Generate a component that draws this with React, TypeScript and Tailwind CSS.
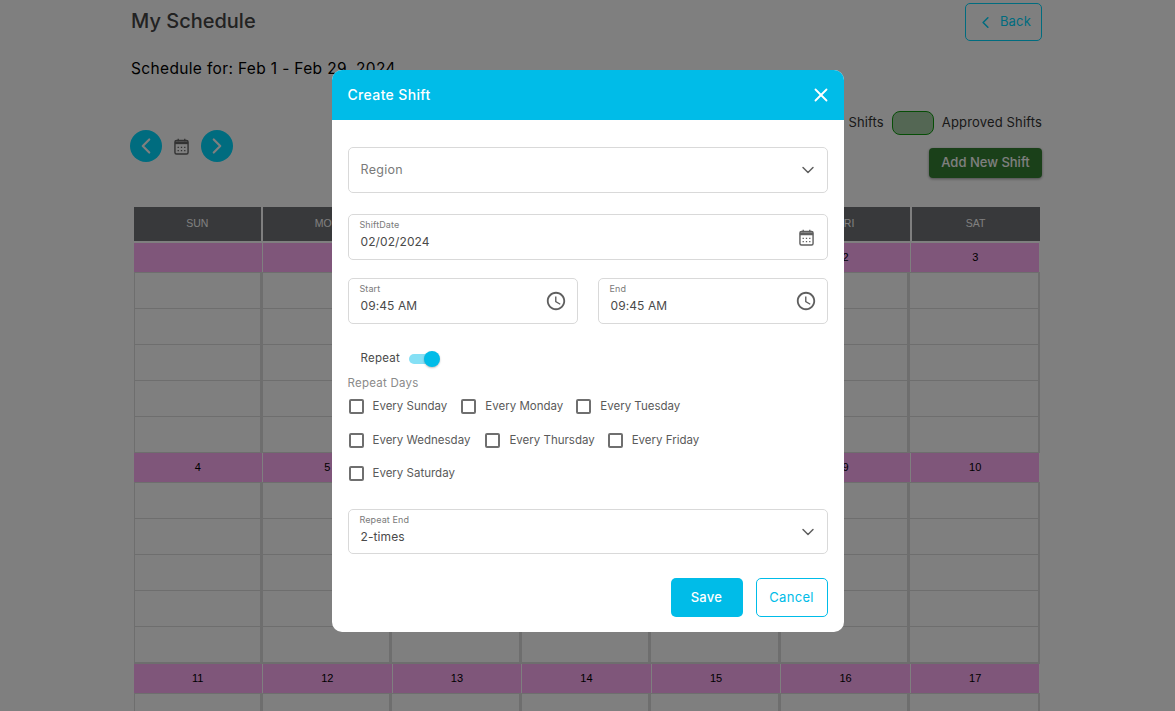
import { ChevronDown, ChevronLeft, ChevronRight, X } from 'lucide-react';

const DAYS = ['SUN', 'MON', 'TUE', 'WED', 'THU', 'FRI', 'SAT'];
const WEEKS = [
  ['', '', '', '', '1', '2', '3'],
  ['4', '5', '6', '7', '8', '9', '10'],
  ['11', '12', '13', '14', '15', '16', '17'],
];

function CalendarIcon({ className }: { className: string }) {
  return (
    <svg viewBox="0 0 16 18" className={className} fill="none">
      <rect x="1" y="2.5" width="14" height="14.5" rx="1.6" stroke="currentColor" strokeWidth="1.5" />
      <path d="M1 3.5h14v3H1z" fill="currentColor" />
      <path d="M4.5 0.8v2.6M11.5 0.8v2.6" stroke="currentColor" strokeWidth="1.4" />
      <path
        d="M3.8 9.2h1.4v1.4H3.8zM7.3 9.2h1.4v1.4H7.3zM10.8 9.2h1.4v1.4h-1.4zM3.8 12.6h1.4V14H3.8zM7.3 12.6h1.4V14H7.3zM10.8 12.6h1.4V14h-1.4z"
        fill="currentColor"
      />
    </svg>
  );
}

function ClockIcon() {
  return (
    <svg viewBox="0 0 24 24" className="h-[22px] w-[22px] text-[#5f5f5f]" fill="currentColor">
      <path d="M11.99 2C6.47 2 2 6.48 2 12s4.47 10 9.99 10C17.52 22 22 17.52 22 12S17.52 2 11.99 2zM12 20c-4.42 0-8-3.58-8-8s3.58-8 8-8 8 3.58 8 8-3.58 8-8 8z" />
      <path d="M12.5 7H11v6l5.25 3.15.75-1.23-4.5-2.67z" />
    </svg>
  );
}

function Field({ label, value, icon, className }: { label: string; value: string; icon: React.ReactNode; className?: string }) {
  return (
    <div className={`relative flex h-[46px] items-center justify-between rounded-[5px] border border-[#d9d9d9] pl-3 pr-[10px] ${className ?? ''}`}>
      <div className="flex flex-col self-start pt-[4px]">
        <span className="-ml-[1px] text-[9px] leading-[12px] tracking-[0.1px] text-[#7a7a7a]">{label}</span>
        <span className="mt-[2px] text-[12px] leading-[18px] tracking-[0.1px] text-[#4a4a4a]">{value}</span>
      </div>
      {icon}
    </div>
  );
}

function DayCheck({ label, className }: { label: string; className?: string }) {
  return (
    <label className={`flex items-center gap-[9px] ${className ?? ''}`}>
      <span className="h-[15px] w-[15px] rounded-[2px] border-2 border-[#6f6f6f]" />
      <span className="pt-[2px] text-[11.5px] text-[#5a5a5a]">{label}</span>
    </label>
  );
}

export default function App() {
  return (
    <div className="relative h-screen overflow-hidden bg-white font-['Inter','Liberation_Sans',sans-serif]">
      <div className="ml-[130px] w-[912px] pt-[3px]">
        <div className="flex items-start justify-between">
          <h1 className="ml-[1px] pt-[6px] text-[20px] font-medium leading-[24px] text-[#444]">My Schedule</h1>
          <button className="flex h-[38px] w-[77px] items-center justify-center gap-[5px] rounded-[5px] border border-[#00d8ff] text-[13px] tracking-[0.2px] text-[#00d8ff]">
            <ChevronLeft size={19} strokeWidth={2} />
            Back
          </button>
        </div>
        <p className="ml-[1px] mt-[18px] text-[15.5px] leading-[20px] tracking-[0.35px] text-black">Schedule for: Feb 1 - Feb 29, 2024</p>

        <div className="mt-[32px] flex justify-end gap-2">
          <div className="flex items-center">
            <span className="text-[13px] tracking-[0.15px] text-[#333]">Pending Shifts</span>
            <span className="ml-2 h-[24px] w-[42px] rounded-[8px] border border-[#0c9c0c] bg-[#a9cfa9]" />
            <span className="ml-2 text-[13px] tracking-[0.15px] text-[#333]">Approved Shifts</span>
          </div>
        </div>

        <div className="-mt-[5px] flex items-start justify-between">
          <div className="flex items-center">
            <button className="flex h-[32px] w-[32px] items-center justify-center rounded-full bg-[#00d8ff] text-white">
              <ChevronLeft size={26} strokeWidth={2} />
            </button>
            <CalendarIcon className="mx-[12px] h-[17px] w-[15px] text-[#666]" />
            <button className="flex h-[32px] w-[32px] items-center justify-center rounded-full bg-[#00d8ff] text-white">
              <ChevronRight size={26} strokeWidth={2} />
            </button>
          </div>
          <button className="mt-[18px] h-[30px] w-[113px] rounded-[4px] bg-[#348032] text-[13px] font-medium text-white shadow-[0_1px_3px_rgba(0,0,0,0.4)]">
            Add New Shift
          </button>
        </div>

        <div className="mt-[29px] ml-[3.5px] w-[906px]">
          <div className="grid grid-cols-7 gap-x-[2px] border-b-[2px] border-white">
            {DAYS.map((d) => (
              <div key={d} className="flex h-[34px] items-center justify-center bg-[#707276] font-['Liberation_Sans',sans-serif] text-[10.5px] text-white">
                {d}
              </div>
            ))}
          </div>
          {WEEKS.map((week, w) => (
            <div key={w}>
              <div className="grid grid-cols-7 gap-x-[1px] border-b border-[#dcdcdc]">
                {week.map((n, i) => (
                  <div key={i} className="flex h-[29px] items-center justify-center bg-[#ffacf4] pb-[1px] font-['Liberation_Sans',sans-serif] text-[11px] text-black">
                    {n}
                  </div>
                ))}
              </div>
              {[0, 1, 2, 3, 4].map((r) => (
                <div key={r} className="grid h-[36px] grid-cols-7 border-b border-[#dcdcdc]">
                  {week.map((_, i) => (
                    <div key={i} className="border-r-[3px] border-[#dcdcdc] first:border-l last:border-r-[2px]" />
                  ))}
                </div>
              ))}
              {w > 0 && <div className="h-[1px] bg-[#dcdcdc]" />}
            </div>
          ))}
        </div>
      </div>

      {/* Modal */}
      <div className="absolute inset-0 flex justify-center bg-black/50">
        <div className="mt-[70px] h-[562px] w-[512px] overflow-hidden rounded-[10px] bg-white">
          <div className="flex h-[50px] items-center justify-between bg-[#00bce8] pb-[1px] pl-4 pr-[12px] text-white">
            <span className="text-[14px] font-medium tracking-[0.35px]">Create Shift</span>
            <X size={22} strokeWidth={2} />
          </div>

          <div className="px-4 pt-[27px]">
            <div className="flex h-[46px] items-center justify-between rounded-[5px] border border-[#d9d9d9] pl-3 pr-[9px]">
              <span className="text-[12.5px] tracking-[0.3px] text-[#7a7a7a]">Region</span>
              <ChevronDown size={20} strokeWidth={1.75} className="text-[#5f5f5f]" />
            </div>

            <Field
              label="ShiftDate"
              value="02/02/2024"
              className="mt-[21px]"
              icon={<CalendarIcon className="mr-[3px] h-[17px] w-[15px] text-[#5f5f5f]" />}
            />

            <div className="mt-[18px] grid grid-cols-2 gap-x-[20px]">
              <Field label="Start" value="09:45 AM" icon={<ClockIcon />} />
              <Field label="End" value="09:45 AM" icon={<ClockIcon />} />
            </div>

            <div className="mt-[25px] flex h-[20px] items-center pl-[13px]">
              <span className="text-[11.5px] tracking-[0.25px] text-[#4a4a4a]">Repeat</span>
              <span className="relative -mt-[1px] ml-[9px] h-[10px] w-[26px] rounded-full bg-[#85e0f5]">
                <span className="absolute -top-[3px] right-[-5px] h-[16px] w-[16px] rounded-full bg-[#00bce8] shadow-[0_1px_2px_rgba(0,0,0,0.25)]" />
              </span>
            </div>

            <p className="mt-[6px] text-[11.5px] leading-[16px] tracking-[0.25px] text-[#8a8a8a]">Repeat Days</p>

            <div className="ml-[1px] mt-[5px] flex h-[20px] items-center">
              <DayCheck label="Every Sunday" />
              <DayCheck label="Every Monday" className="ml-[14px]" />
              <DayCheck label="Every Tuesday" className="ml-[13px]" />
            </div>
            <div className="ml-[1px] mt-[14px] flex h-[20px] items-center">
              <DayCheck label="Every Wednesday" />
              <DayCheck label="Every Thursday" className="ml-[15px]" />
              <DayCheck label="Every Friday" className="ml-[13px]" />
            </div>
            <div className="ml-[1px] mt-[13px] flex h-[20px] items-center">
              <DayCheck label="Every Saturday" />
            </div>

            <Field
              label="Repeat End"
              value="2-times"
              className="mt-[26px] !h-[45px] !pr-[9px]"
              icon={<ChevronDown size={20} strokeWidth={1.75} className="text-[#5f5f5f]" />}
            />

            <div className="mt-[24px] flex justify-end gap-[13px]">
              <button className="h-[39px] w-[72px] rounded-[5px] bg-[#00bce8] text-[13px] font-medium tracking-[0.3px] text-white">Save</button>
              <button className="h-[39px] w-[72px] rounded-[5px] border border-[#00bce8] text-[13px] tracking-[0.3px] text-[#00bce8]">Cancel</button>
            </div>
          </div>
        </div>
      </div>
    </div>
  );
}
